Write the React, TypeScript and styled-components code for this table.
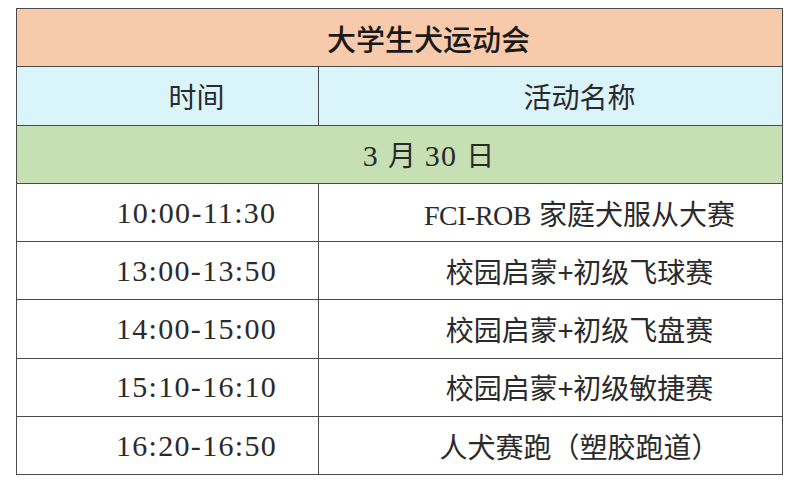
import styled, { createGlobalStyle } from "styled-components";

const GlobalStyle = createGlobalStyle`
    html, body {
        margin: 0;
        padding: 0;
        background: #ffffff;
    }
`;

const Page = styled.div`
    padding: 8px 18px 0 16px;
    font-family: "Liberation Serif", "Noto Sans CJK SC", serif;
    color: #222;
`;

const Table = styled.table`
    width: 766px;
    border-collapse: collapse;
    table-layout: fixed;
    border: 1.5px solid #4a4a4a;
`;

const Cell = styled.td<{ $bg?: string; $title?: boolean }>`
    height: 57.3px;
    padding: 0 0 0 58px;
    border: 1.5px solid #4a4a4a;
    background: ${({ $bg }) => $bg || "#ffffff"};
    text-align: center;
    vertical-align: middle;
    font-size: ${({ $title }) => ($title ? "29px" : "28px")};
    font-weight: ${({ $title }) => ($title ? 500 : 400)};
    color: ${({ $title }) => ($title ? "#1a1a1a" : "#2a2a2a")};
    white-space: nowrap;
`;

const Cjk = styled.span`
    font-family: "Noto Sans CJK SC", sans-serif;
    font-weight: inherit;
`;

const Time = styled.span`
    font-family: "Liberation Serif", serif;
    font-size: 30px;
    letter-spacing: 1.3px;
`;

const Latin = styled.span`
    font-family: "Liberation Serif", serif;
    font-size: 28px;
    letter-spacing: -0.5px;
    margin-right: 8px;
`;

const rows = [
    { time: "10:00-11:30", latin: "FCI-ROB", name: "家庭犬服从大赛" },
    { time: "13:00-13:50", name: "校园启蒙+初级飞球赛" },
    { time: "14:00-15:00", name: "校园启蒙+初级飞盘赛" },
    { time: "15:10-16:10", name: "校园启蒙+初级敏捷赛" },
    { time: "16:20-16:50", name: "人犬赛跑（塑胶跑道）" },
];

export default function App() {
    return (
        <Page>
            <GlobalStyle />
            <Table>
                <colgroup>
                    <col style={{ width: 302 }} />
                    <col style={{ width: 464 }} />
                </colgroup>
                <tbody>
                    <tr>
                        <Cell colSpan={2} $bg="#f7caab" $title>
                            <Cjk>大学生犬运动会</Cjk>
                        </Cell>
                    </tr>
                    <tr>
                        <Cell $bg="#daf4fb">
                            <Cjk>时间</Cjk>
                        </Cell>
                        <Cell $bg="#daf4fb">
                            <Cjk>活动名称</Cjk>
                        </Cell>
                    </tr>
                    <tr>
                        <Cell colSpan={2} $bg="#c6dfb3">
                            <Time>3 </Time>
                            <Cjk>月</Cjk>
                            <Time> 30 </Time>
                            <Cjk>日</Cjk>
                        </Cell>
                    </tr>
                    {rows.map((row) => (
                        <tr key={row.time}>
                            <Cell>
                                <Time>{row.time}</Time>
                            </Cell>
                            <Cell>
                                {row.latin && <Latin>{row.latin}</Latin>}
                                <Cjk>{row.name}</Cjk>
                            </Cell>
                        </tr>
                    ))}
                </tbody>
            </Table>
        </Page>
    );
}
